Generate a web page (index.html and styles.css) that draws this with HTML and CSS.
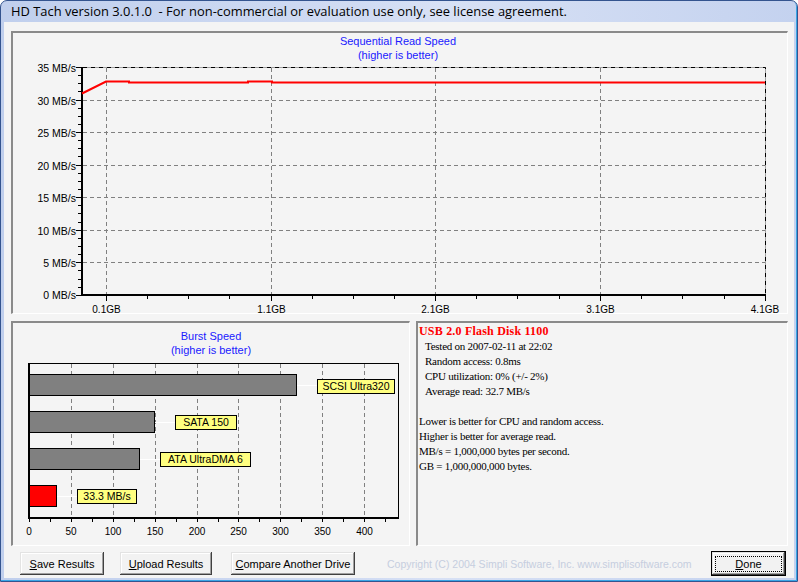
FILE: index.html
```html
<!DOCTYPE html>
<html>
<head>
<meta charset="utf-8">
<title>HD Tach</title>
<link rel="stylesheet" href="styles.css">
</head>
<body>
<div class="window">
  <div class="titlebar"><span class="title">HD Tach version 3.0.1.0&nbsp; - For non-commercial or evaluation use only, see license agreement.</span></div>
  <div class="client">
    <div class="panel top-panel">
      <svg class="chart" width="774" height="280" viewBox="13 33 774 280">
        <text class="ttl" x="398" y="45" text-anchor="middle">Sequential Read Speed</text>
        <text class="ttl" x="398" y="59" text-anchor="middle">(higher is better)</text>
        <path class="grid" d="M83 100.5H765M83 132.5H765M83 165.5H765M83 197.5H765M83 230.5H765M83 262.5H765M106.5 68V294M271.5 68V294M435.5 68V294M600.5 68V294"/>
        <path class="frame-base" d="M83 67.5H765.5V294"/>
        <path class="frame-dash" d="M83 67.5H765.5V294"/>
        <rect class="axis" x="81" y="67" width="2" height="229"/>
        <rect class="axis" x="81" y="294" width="685" height="2"/>
        <path class="tick" d="M76 67.5H81M76 100.5H81M76 132.5H81M76 165.5H81M76 197.5H81M76 230.5H81M76 262.5H81M76 295.5H81M78 75.5H81M78 83.5H81M78 91.5H81M78 108.5H81M78 116.5H81M78 124.5H81M78 140.5H81M78 148.5H81M78 156.5H81M78 173.5H81M78 181.5H81M78 189.5H81M78 205.5H81M78 213.5H81M78 222.5H81M78 238.5H81M78 246.5H81M78 254.5H81M78 270.5H81M78 279.5H81M78 287.5H81"/>
        <path class="tick" d="M106.5 296V301M271.5 296V301M435.5 296V301M600.5 296V301M765.5 296V301M147.5 296V299M188.5 296V299M229.5 296V299M312.5 296V299M353.5 296V299M394.5 296V299M476.5 296V299M517.5 296V299M559.5 296V299M641.5 296V299M682.5 296V299M724.5 296V299"/>
        <text class="ylab" x="76" y="71.5" text-anchor="end">35 MB/s</text>
        <text class="ylab" x="76" y="104.5" text-anchor="end">30 MB/s</text>
        <text class="ylab" x="76" y="136.5" text-anchor="end">25 MB/s</text>
        <text class="ylab" x="76" y="169.5" text-anchor="end">20 MB/s</text>
        <text class="ylab" x="76" y="201.5" text-anchor="end">15 MB/s</text>
        <text class="ylab" x="76" y="234.5" text-anchor="end">10 MB/s</text>
        <text class="ylab" x="76" y="266.5" text-anchor="end">5 MB/s</text>
        <text class="ylab" x="76" y="299" text-anchor="end">0 MB/s</text>
        <text class="xlab" x="106.5" y="312.5" text-anchor="middle">0.1GB</text>
        <text class="xlab" x="271.5" y="312.5" text-anchor="middle">1.1GB</text>
        <text class="xlab" x="435.5" y="312.5" text-anchor="middle">2.1GB</text>
        <text class="xlab" x="600.5" y="312.5" text-anchor="middle">3.1GB</text>
        <text class="xlab" x="765" y="312.5" text-anchor="middle">4.1GB</text>
        <path class="trace" d="M82 93.5L106 81.5H129V82.5H248V81.5H272V82.5H765"/>
      </svg>
    </div>
    <div class="bottom-row">
      <div class="panel burst-panel">
        <svg class="chart" width="396" height="222" viewBox="13 323 396 222">
          <text class="ttl" x="211" y="340" text-anchor="middle">Burst Speed</text>
          <text class="ttl" x="211" y="354" text-anchor="middle">(higher is better)</text>
          <path class="grid" d="M71.5 364V517M113.5 364V517M155.5 364V517M197.5 364V517M238.5 364V517M280.5 364V517M322.5 364V517M364.5 364V517"/>
          <rect class="box" x="29.5" y="363.5" width="369" height="154"/>
          <rect class="axis" x="28" y="363" width="2" height="156"/>
          <rect class="axis" x="28" y="517" width="371" height="2"/>
          <path class="tick" d="M29.5 519V522M50.5 519V522M71.5 519V522M92.5 519V522M113.5 519V522M134.5 519V522M155.5 519V522M176.5 519V522M197.5 519V522M218.5 519V522M238.5 519V522M259.5 519V522M280.5 519V522M301.5 519V522M322.5 519V522M343.5 519V522M364.5 519V522M385.5 519V522"/>
          <rect class="bar" x="29.5" y="374.5" width="267" height="21"/>
          <rect class="bar" x="29.5" y="411.5" width="125" height="21"/>
          <rect class="bar" x="29.5" y="448.5" width="110" height="21"/>
          <rect class="bar bar-mine" x="29.5" y="485.5" width="27" height="21"/>
          <path class="leader" d="M297 385.5H317M155 422.5H175M140 459.5H160M57 496.5H77"/>
          <rect class="tag-box" x="317.5" y="379.5" width="77" height="14"/>
          <rect class="tag-box" x="175.5" y="415.5" width="61" height="14"/>
          <rect class="tag-box" x="160.5" y="452.5" width="90" height="14"/>
          <rect class="tag-box" x="77.5" y="489.5" width="59" height="14"/>
          <text class="tag" x="356" y="390.3" text-anchor="middle">SCSI Ultra320</text>
          <text class="tag" x="206" y="426.3" text-anchor="middle">SATA 150</text>
          <text class="tag" x="205.5" y="463.3" text-anchor="middle">ATA UltraDMA 6</text>
          <text class="tag" x="107" y="500.3" text-anchor="middle">33.3 MB/s</text>
          <text class="xlab" x="29" y="535" text-anchor="middle">0</text>
          <text class="xlab" x="71" y="535" text-anchor="middle">50</text>
          <text class="xlab" x="113" y="535" text-anchor="middle">100</text>
          <text class="xlab" x="155" y="535" text-anchor="middle">150</text>
          <text class="xlab" x="197" y="535" text-anchor="middle">200</text>
          <text class="xlab" x="238.5" y="535" text-anchor="middle">250</text>
          <text class="xlab" x="280.5" y="535" text-anchor="middle">300</text>
          <text class="xlab" x="322.5" y="535" text-anchor="middle">350</text>
          <text class="xlab" x="364.5" y="535" text-anchor="middle">400</text>
        </svg>
      </div>
      <div class="panel info-panel">
        <div class="drive">USB 2.0 Flash Disk 1100</div>
        <div class="stat">Tested on 2007-02-11 at 22:02</div>
        <div class="stat">Random access: 0.8ms</div>
        <div class="stat">CPU utilization: 0% (+/- 2%)</div>
        <div class="stat">Average read: 32.7 MB/s</div>
        <div class="notes">
          <div>Lower is better for CPU and random access.</div>
          <div>Higher is better for average read.</div>
          <div>MB/s = 1,000,000 bytes per second.</div>
          <div>GB = 1,000,000,000 bytes.</div>
        </div>
      </div>
    </div>
    <div class="footer">
      <button class="btn btn-save"><u>S</u>ave Results</button>
      <button class="btn btn-upload"><u>U</u>pload Results</button>
      <button class="btn btn-compare"><u>C</u>ompare Another Drive</button>
      <span class="copyright">Copyright (C) 2004 Simpli Software, Inc. www.simplisoftware.com</span>
      <button class="btn btn-done"><u>D</u>one</button>
    </div>
  </div>
</div>
</body>
</html>
```
FILE: styles.css
```css
* { box-sizing: border-box; }
html, body { margin: 0; padding: 0; }
body {
  width: 798px;
  height: 582px;
  overflow: hidden;
  background: #ffffff;
  font-family: "Liberation Sans", Arial, sans-serif;
}
.window {
  width: 798px;
  height: 582px;
  display: flex;
  flex-direction: column;
  border: 1px solid #34548f;
  border-radius: 7px 7px 0 0;
  background: linear-gradient(90deg, #c0cfed 0%, #d0dbf3 45%, #d8e1f5 55%, #c4d2ef 100%);
  padding: 0 3px 3px 3px;
  box-shadow: inset -1px -1px 0 #3aa6e6;
}
.titlebar {
  height: 21px;
  padding: 2px 0 0 7px;
  font-family: "Open Sans", "Noto Sans", sans-serif;
  font-size: 12.9px;
  line-height: 17px;
  color: #000;
  white-space: nowrap;
}
.client {
  flex: 1;
  display: flex;
  flex-direction: column;
  background: #f4f4f4;
  padding: 9px 6px 0 7px;
}
.panel {
  border-style: solid;
  border-width: 2px 1px 1px 2px;
  border-color: #8a8a8a #ffffff #ffffff #8a8a8a;
}
.top-panel { height: 283px; }
.chart { display: block; }
.bottom-row {
  display: flex;
  gap: 6px;
  margin-top: 7px;
  height: 225px;
}
.burst-panel { width: 399px; }
.info-panel {
  flex: 1;
  padding: 1px 0 0 1px;
  font-family: "Liberation Serif", "Times New Roman", serif;
  font-size: 11px;
  line-height: 15px;
  letter-spacing: -0.25px;
  color: #000;
}
.drive {
  font-size: 12px;
  font-weight: bold;
  color: #ff0000;
  letter-spacing: 0.2px;
}
.stat { padding-left: 6px; }
.notes { margin-top: 15px; }

.ttl { font-size: 11px; fill: #1a1aff; }
.ylab { font-size: 10.5px; fill: #000; }
.xlab { font-size: 10px; fill: #000; }
.tag { font-size: 10.5px; fill: #000; }
.grid { stroke: #808080; stroke-width: 1; stroke-dasharray: 4 3; fill: none; }
.frame-base { stroke: #a0a0a0; stroke-width: 1; fill: none; }
.frame-dash { stroke: #000; stroke-width: 1; stroke-dasharray: 4 4; fill: none; }
.axis { fill: #000; }
.tick { stroke: #000; stroke-width: 1; fill: none; }
.trace { stroke: #ff0000; stroke-width: 2; fill: none; }
.box { fill: none; stroke: #000; stroke-width: 1; }
.bar { fill: #808080; stroke: #000; stroke-width: 1; }
.bar-mine { fill: #ff0000; }
.leader { stroke: #ffffff; stroke-width: 1; fill: none; }
.tag-box { fill: #ffff80; stroke: #000; stroke-width: 1; }

.footer {
  height: 32px;
  display: flex;
  align-items: center;
  padding: 5px 2px 2px 9px;
}
.btn {
  height: 23px;
  padding: 0;
  margin: 0;
  border: none;
  background: #f2f2f2;
  font-family: "Liberation Sans", Arial, sans-serif;
  font-size: 11px;
  color: #000;
  box-shadow: inset -1px -1px 0 #404040, inset 1px 1px 0 #e3e3e3, inset -2px -2px 0 #a0a0a0, inset 2px 2px 0 #ffffff;
}
.btn-save { width: 84px; }
.btn-upload { width: 92px; margin-left: 16px; }
.btn-compare { width: 124px; margin-left: 19px; }
.copyright {
  margin-left: 32px;
  font-size: 10.5px;
  color: #c6cedf;
  white-space: nowrap;
}
.btn-done {
  width: 75px;
  height: 25px;
  margin-left: auto;
  border: 1px solid #000;
  position: relative;
}
.btn-done::after {
  content: "";
  position: absolute;
  top: 4px;
  left: 3px;
  right: 3px;
  bottom: 3px;
  border: 1px dotted #000;
}
```
